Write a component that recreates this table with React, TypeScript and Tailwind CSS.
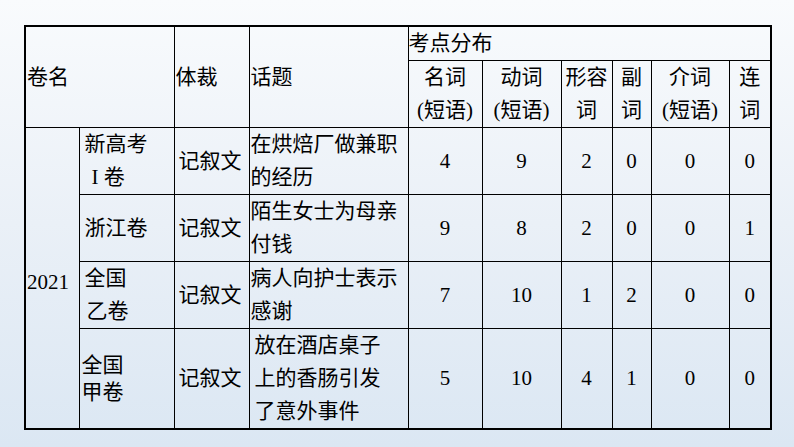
const rows = [
  {
    name: (
      <>
        新高考
        <br />
        <span className="ml-[7px]">I 卷</span>
      </>
    ),
    namePad: "pl-[5px]",
    topic: ["在烘焙厂做兼职", "的经历"],
    topicPad: "pl-[1px]",
    nums: ["4", "9", "2", "0", "0", "0"],
    h: "h-[67px]",
  },
  {
    name: <>浙江卷</>,
    namePad: "pl-[5px]",
    topic: ["陌生女士为母亲", "付钱"],
    topicPad: "pl-[1px]",
    nums: ["9", "8", "2", "0", "0", "1"],
    h: "h-[67px]",
  },
  {
    name: (
      <>
        全国
        <br />
        <span className="ml-[2px]">乙卷</span>
      </>
    ),
    namePad: "pl-[5px]",
    topic: ["病人向护士表示", "感谢"],
    topicPad: "pl-[1px]",
    nums: ["7", "10", "1", "2", "0", "0"],
    h: "h-[67px]",
  },
  {
    name: (
      <span className="block leading-[27px]">
        全国
        <br />
        甲卷
      </span>
    ),
    namePad: "pl-[2px]",
    topic: ["放在酒店桌子", "上的香肠引发", "了意外事件"],
    topicPad: "pl-[5px]",
    nums: ["5", "10", "4", "1", "0", "0"],
    h: "h-[100px]",
  },
];

const cell = "border border-black p-0 align-middle";

export default function App() {
  return (
    <div
      className="h-[447px] w-[794px] overflow-hidden bg-gradient-to-b from-[#f9fbfd] via-[#eaf0f7] to-[#dbe7f3] pl-[24px] pt-[25px] text-[21px] leading-[33px] text-black"
      style={{ fontFamily: '"Liberation Serif", "Noto Sans CJK SC", serif' }}
    >
      <table className="table-fixed border-collapse border-2 border-black">
        <colgroup>
          <col className="w-[54px]" />
          <col className="w-[95px]" />
          <col className="w-[75px]" />
          <col className="w-[159px]" />
          <col className="w-[74px]" />
          <col className="w-[79px]" />
          <col className="w-[51px]" />
          <col className="w-[39px]" />
          <col className="w-[78px]" />
          <col className="w-[42px]" />
        </colgroup>
        <thead>
          <tr className="h-[34px]">
            <th colSpan={2} rowSpan={2} className={`${cell} pl-[1px] text-left font-normal`}>
              卷名
            </th>
            <th rowSpan={2} className={`${cell} pl-[1px] text-left font-normal`}>
              体裁
            </th>
            <th rowSpan={2} className={`${cell} pl-[1px] text-left font-normal`}>
              话题
            </th>
            <th colSpan={6} className={`${cell} text-left font-normal`}>
              考点分布
            </th>
          </tr>
          <tr className="h-[67px]">
            {["名词", "动词", "形容", "副", "介词", "连"].map((t, i) => (
              <th key={i} className={`${cell} text-center font-normal`}>
                {t}
                <br />
                {i === 2 || i === 3 || i === 5 ? "词" : "(短语)"}
              </th>
            ))}
          </tr>
        </thead>
        <tbody>
          {rows.map((r, i) => (
            <tr key={i} className={r.h}>
              {i === 0 && (
                <td rowSpan={4} className={`${cell} pl-[1px] pt-[8px] text-left`}>
                  2021
                </td>
              )}
              <td className={`${cell} ${r.namePad}`}>{r.name}</td>
              <td className={`${cell} pl-[4px]`}>记叙文</td>
              <td className={`${cell} ${r.topicPad}`}>
                {r.topic.map((t, j) => (
                  <div key={j}>{t}</div>
                ))}
              </td>
              {r.nums.map((n, j) => (
                <td key={j} className={`${cell} text-center`}>
                  {n}
                </td>
              ))}
            </tr>
          ))}
        </tbody>
      </table>
    </div>
  );
}
